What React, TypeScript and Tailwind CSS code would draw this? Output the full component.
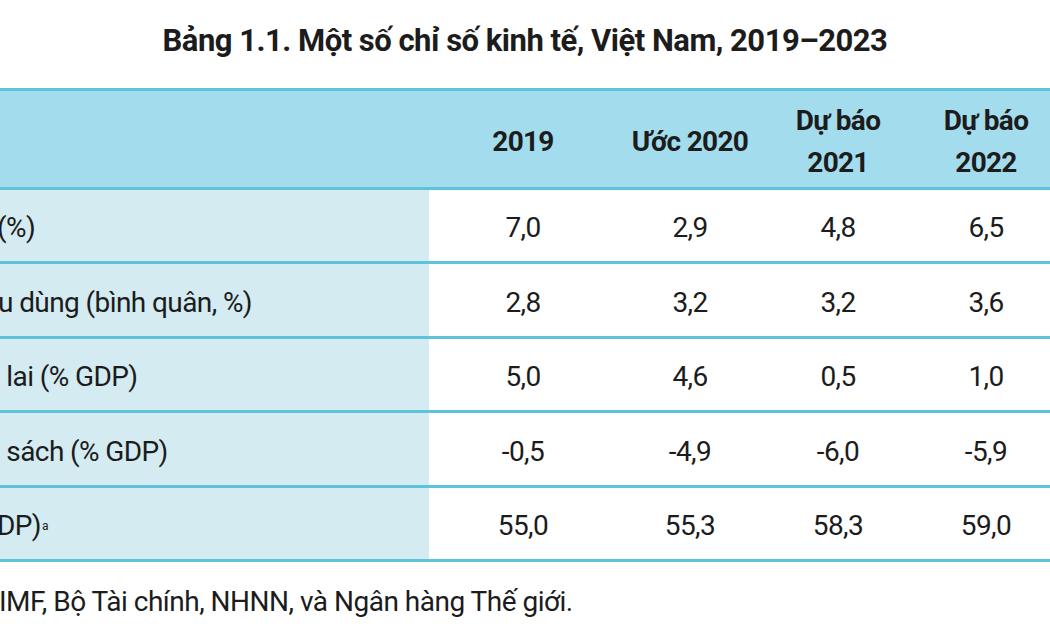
import React from "react";

const rows = [
  { label: "(%)", cls: "-ml-[3px]", h: "h-[74px]", v: ["7,0", "2,9", "4,8", "6,5"] },
  { label: "u dùng (bình quân, %)", cls: "-ml-[2px]", h: "h-[75px]", v: ["2,8", "3,2", "3,2", "3,6"] },
  { label: "\u00a0lai (% GDP)", cls: "ml-0", h: "h-[74px]", v: ["5,0", "4,6", "0,5", "1,0"] },
  { label: "\u00a0sách (% GDP)", cls: "ml-0", h: "h-[75px]", v: ["-0,5", "-4,9", "-6,0", "-5,9"] },
  { label: "DP)", sup: true, cls: "-ml-[3px]", h: "h-[74px]", v: ["55,0", "55,3", "58,3", "59,0"] },
];

const colW = ["w-[188px]", "w-[146px]", "w-[150px]", "w-[146px]"];

export default function App() {
  return (
    <div
      className="w-[1050px] h-[630px] overflow-hidden bg-white text-[#1c1c1c]"
      style={{ fontFamily: "Roboto, 'Liberation Sans', sans-serif" }}
    >
      <div className="h-[88px] flex items-center justify-center pb-[6px]">
        <h1 className="text-[31px] font-bold tracking-[-0.5px] whitespace-nowrap">
          Bảng 1.1. Một số chỉ số kinh tế, Việt Nam, 2019–2023
        </h1>
      </div>
      <div className="w-[1060px]">
        <div className="flex h-[102px] bg-[#a3dced] border-t-[3px] border-b-[3px] border-[#5ec3d9]">
          <div className="w-[429px]" />
          {["2019", "Ước 2020"].map((h, i) => (
            <div key={h} className={`${colW[i]} flex items-center justify-center text-[28px] font-bold tracking-[-0.7px] pt-[6px]`}>
              {h}
            </div>
          ))}
          {["2021", "2022"].map((y, i) => (
            <div key={y} className={`${colW[i + 2]} flex flex-col items-center justify-center text-[28px] font-bold tracking-[-0.7px] leading-[42px] pt-[5px]`}>
              <span>Dự báo</span>
              <span>{y}</span>
            </div>
          ))}
        </div>
        {rows.map((r, idx) => (
          <div key={idx} className={`flex ${r.h} border-b-[3px] border-[#5ec3d9]`}>
            <div className="w-[429px] bg-[#d3ebf1] flex items-center overflow-hidden pt-[5px] text-[28px] whitespace-nowrap tracking-[-0.6px]">
              <span className={r.cls}>
                {r.label}
                {r.sup && <sup className="text-[12px] ml-[1px] relative -top-[5px]">a</sup>}
              </span>
            </div>
            {r.v.map((v, i) => (
              <div key={i} className={`${colW[i]} flex items-center justify-center pt-[5px] text-[28px] tracking-[-0.6px]`}>
                {v}
              </div>
            ))}
          </div>
        ))}
        <div className="h-[69px] flex items-center pt-[10px] text-[28px] tracking-[-0.5px] whitespace-nowrap">
          <span className="-ml-[1px]">IMF, Bộ Tài chính, NHNN, và Ngân hàng Thế giới.</span>
        </div>
      </div>
    </div>
  );
}
